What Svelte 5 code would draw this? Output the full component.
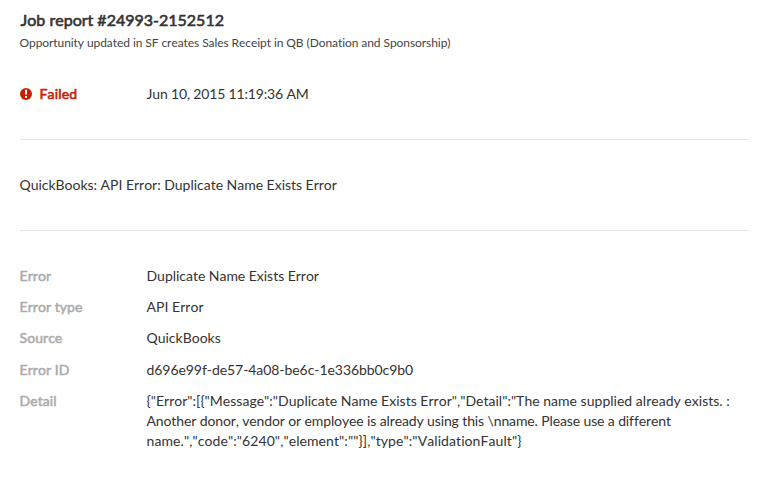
<script>
  const rows = [
    { label: 'Error', value: 'Duplicate Name Exists Error', tracking: -0.03 },
    { label: 'Error type', value: 'API Error', tracking: 0.04 },
    { label: 'Source', value: 'QuickBooks', tracking: 0 },
    { label: 'Error ID', value: 'd696e99f-de57-4a08-be6c-1e336bb0c9b0', tracking: -0.06 }
  ];
  const detail = [
    { text: '{"Error":[{"Message":"Duplicate Name Exists Error","Detail":"The name supplied already exists. :', tracking: 0.02 },
    { text: 'Another donor, vendor or employee is already using this \\nname. Please use a different', tracking: -0.12 },
    { text: 'name.","code":"6240","element":""}],"type":"ValidationFault"}', tracking: 0.085 }
  ];
</script>

<main>
  <header>
    <h1>Job report #24993-2152512</h1>
    <p class="sub">Opportunity updated in SF creates Sales Receipt in QB (Donation and Sponsorship)</p>
    <div class="status">
      <span class="failed">
        <svg width="12" height="12" viewBox="0 0 12 12"><circle cx="6" cy="6" r="6" fill="#c82000" /><path d="M4.9 1.8h2.2l-.3 5H5.2zM5 7.9h2v2H5z" fill="#fff" /></svg>
        Failed
      </span>
      <time>Jun 10, 2015 11:19:36 AM</time>
    </div>
  </header>
  <section class="message">QuickBooks: API Error: Duplicate Name Exists Error</section>
  <dl>
    {#each rows as row}
      <dt>{row.label}</dt>
      <dd style="letter-spacing: {row.tracking}px">{row.value}</dd>
    {/each}
    <dt>Detail</dt>
    <dd>
      {#each detail as line}
        <div style="letter-spacing: {line.tracking}px">{line.text}</div>
      {/each}
    </dd>
  </dl>
</main>

<style>
  :global(body) { background: #fff; }
  main {
    box-sizing: border-box;
    height: 481px;
    padding: 9px 16px 0 19.5px;
    overflow: hidden;
    font: 14px/20px Lato, sans-serif;
    font-kerning: none;
    font-variant-ligatures: none;
    color: #333;
  }
  header { height: 130px; border-bottom: 1px solid #e6e6e6; }
  h1 { margin: 0; padding-left: 1px; font-size: 16px; line-height: 22px; font-weight: 400; -webkit-text-stroke: .6px; }
  .sub { margin: 2px 0 0; font-size: 12px; line-height: 20px; letter-spacing: -.075px; color: #444; }
  .status { display: flex; margin-top: 31px; }
  .failed { display: flex; align-items: center; gap: 8px; width: 127px; letter-spacing: .15px; -webkit-text-stroke: .6px; color: #c82000; }
  .failed svg { -webkit-text-stroke: 0; }
  time { letter-spacing: -.16px; }
  .message { height: 55px; padding-top: 35px; letter-spacing: -.02px; border-bottom: 1px solid #e6e6e6; }
  dl { display: grid; grid-template-columns: 127px 1fr; row-gap: 11.2px; margin: 35px 0 0; }
  dt { color: #aaa; letter-spacing: .05px; -webkit-text-stroke: .5px; }
  dd { margin: 0; white-space: nowrap; }
</style>
